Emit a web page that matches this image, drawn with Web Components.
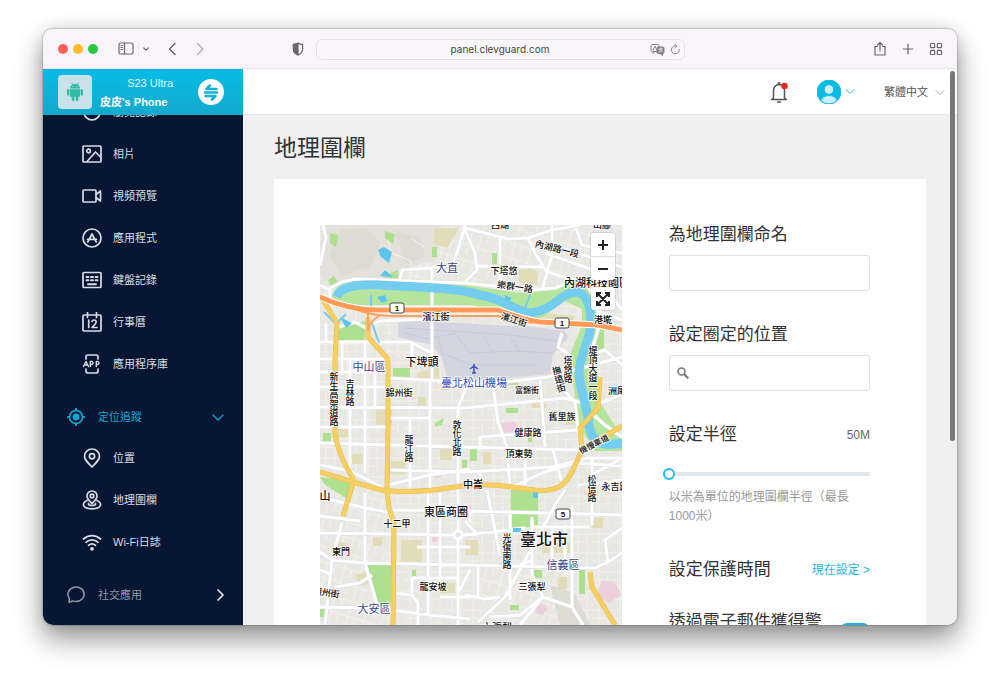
<!DOCTYPE html>
<html lang="zh-Hant">
<head>
<meta charset="utf-8">
<meta name="viewport" content="width=device-width, initial-scale=1">
<title>地理圍欄</title>
<style>
  html, body { margin: 0; height: 100%; }
  body {
    background: #fff;
    color: #333;
    font-family: "Liberation Sans", "Noto Sans CJK TC", sans-serif;
    font-size: 12px;
    --accent: #12b7e2;
  }
</style>
</head>
<body>
<browser-window>
  <browser-toolbar slot="toolbar" address="panel.clevguard.com"></browser-toolbar>
  <side-panel slot="sidebar">
    <phone-card slot="head" model="S23 Ultra" name="皮皮's Phone"></phone-card>
    <nav-item icon="history">瀏覽記錄</nav-item>
    <nav-item icon="photo">相片</nav-item>
    <nav-item icon="video">視頻預覽</nav-item>
    <nav-item icon="apps">應用程式</nav-item>
    <nav-item icon="keyboard">鍵盤記錄</nav-item>
    <nav-item icon="calendar">行事曆</nav-item>
    <nav-item icon="applib">應用程序庫</nav-item>
    <nav-section icon="target" open>定位追蹤</nav-section>
    <nav-item icon="pin">位置</nav-item>
    <nav-item icon="fence">地理圍欄</nav-item>
    <nav-item icon="wifi">Wi-Fi日誌</nav-item>
    <nav-section icon="chat">社交應用</nav-section>
  </side-panel>
  <account-bar slot="header"></account-bar>
  <page-card heading="地理圍欄">
    <city-map slot="map"></city-map>
    <fence-form slot="form"></fence-form>
  </page-card>
</browser-window>

<script>
const define = (name, markup, setup) => {
  const template = document.createElement('template');
  customElements.define(name, class extends HTMLElement {
    constructor() {
      super();
      this.attachShadow({ mode: 'open' });
    }
    connectedCallback() {
      if (this.shadowRoot.childNodes.length) return;
      template.innerHTML = typeof markup === 'function' ? markup(this) : markup;
      this.shadowRoot.append(template.content.cloneNode(true));
      if (setup) setup(this.shadowRoot, this);
    }
  });
};

/* ---------- Browser frame ---------- */
define('browser-window', `
<style>
  :host { display: flex; box-sizing: border-box; height: 100vh; padding: 29px 43px 57px; }
  .frame {
    flex: 1; min-width: 0; display: grid; position: relative; overflow: hidden;
    grid-template: auto auto minmax(0, 1fr) / 200px minmax(0, 1fr);
    border-radius: 10px; background: #f0f0f0;
  }
  .shadow { flex: 1; display: flex; min-width: 0; border-radius: 10px;
    box-shadow: 0 0 1px 1px rgba(0,0,0,.14), 0 14px 28px rgba(0,0,0,.42), 0 0 16px rgba(0,0,0,.12); }
  slot[name=toolbar] { display: block; grid-column: 1 / -1; }
  slot[name=sidebar] { display: grid; grid-row: 2 / 4; grid-column: 1; min-height: 0; }
  main { min-height: 0; overflow: hidden; }
  .thumb { position: absolute; right: 2px; top: 42px; width: 5px; height: 62%; border-radius: 3px; background: #777; }
</style>
<div class="shadow"><div class="frame">
  <slot name="toolbar"></slot>
  <slot name="sidebar"></slot>
  <slot name="header"></slot>
  <main><slot></slot></main>
  <div class="thumb"></div>
</div></div>`);

define('browser-toolbar', el => `
<style>
  :host { display: block; }
  .bar { display: grid; grid-template-columns: 1fr minmax(0, 369px) 1fr; align-items: center;
    height: 40px; box-sizing: border-box; background: #f9f4fa; border-bottom: 1px solid #e9e4ea; padding-top: 1px; }
  .side { display: flex; align-items: center; }
  .left { padding-left: 15px; }
  .dots { display: flex; gap: 5px; margin-right: 20px; }
  .dots i { width: 10px; height: 10px; border-radius: 50%; }
  .right { justify-content: flex-end; gap: 14px; padding-right: 14px; }
  button { border: 0; padding: 0; background: none; display: block; color: #6a666c; }
  svg { display: block; fill: none; stroke: currentColor; stroke-width: 1.2; stroke-linecap: round; stroke-linejoin: round; }
  .panel { margin-right: 4px; padding-right: 4px; border-right: 1px solid #ece7ed; }
  .back { margin-left: 17px; color: #58545a; }
  .fwd { margin-left: 13px; color: #aaa6ac; }
  .shield { margin-left: auto; margin-right: 11px; }
  .url { position: relative; }
  input { display: block; box-sizing: border-box; width: 100%; height: 21px; border: 1px solid #e5e0e6; border-radius: 6px;
    background: #faf7fb; text-align: center; font: 10px/19px Inter, "Liberation Sans", sans-serif; color: #444; padding: 0; }
  .tools { position: absolute; right: 4px; top: 4px; display: flex; gap: 5px; }
  .tools button { color: #838085; }
</style>
<div class="bar">
  <div class="side left">
    <div class="dots"><i style="background:#ff5f57"></i><i style="background:#febc2e"></i><i style="background:#28c840"></i></div>
    <button class="panel" aria-label="側邊欄"><svg width="16" height="14"><rect x="1" y="1" width="14" height="11" rx="1.5"/><path d="M6.500 1v11M3 3.500h1.500M3 5.500h1.500M3 7.500h1.500"/></svg></button>
    <button aria-label="標籤頁群組"><svg width="6" height="12"><path d="M.8 5l2.200 2.200L5.200 5"/></svg></button>
    <button class="back" aria-label="上一頁"><svg width="14" height="14"><path d="M9 1.500L3.500 7 9 12.500"/></svg></button>
    <button class="fwd" aria-label="下一頁"><svg width="14" height="14"><path d="M4.500 1.500L10 7l-5.500 5.500"/></svg></button>
    <button class="shield" aria-label="隱私"><svg width="14" height="14"><path d="M7 1.200c-1.500 1-3 1.200-4.600 1.200v4.600c0 3 2 4.900 4.600 5.900 2.600-1 4.600-2.900 4.600-5.900V2.400C10 2.400 8.500 2.200 7 1.200z"/><path d="M7 1.200v11.700c-2.600-1-4.600-2.900-4.600-5.900V2.400C4 2.400 5.500 2.200 7 1.200z" fill="currentColor"/></svg></button>
  </div>
  <div class="url">
    <input type="text" aria-label="網址" value="${el.getAttribute('address')}">
    <div class="tools">
      <button aria-label="翻譯"><svg width="15" height="13" style="stroke-width:1"><rect x="1" y="1.500" width="8" height="7" rx="1.500"/><path d="M3.200 7L5 3l1.800 4M3 8.500v2l2-2"/><rect x="7" y="4" width="7" height="6.500" rx="1.500" fill="currentColor"/><path d="M10 10.500l2.500 2v-2z" fill="currentColor"/><path d="M8.800 6h3.600M10.600 5v1M9 9c1.600-.6 2.600-1.600 3-3M9.500 6.500c.5 1 1.500 2 2.700 2.500" stroke="#faf7fb" stroke-width=".7"/></svg></button>
      <button aria-label="重新載入"><svg width="11" height="13" style="stroke-width:1"><path d="M9.300 6.500a4 4 0 1 1-2.500-3.400M4.800 1l2 2-2 2"/></svg></button>
    </div>
  </div>
  <div class="side right">
    <button aria-label="分享"><svg width="14" height="16"><path d="M4.500 5.500H2V14h10V5.500H9.500M7 10V1.500M4.500 4L7 1.500 9.500 4"/></svg></button>
    <button aria-label="新標籤頁"><svg width="14" height="14"><path d="M7 2v10M2 7h10"/></svg></button>
    <button aria-label="標籤頁概覽"><svg width="14" height="14"><rect x="1.500" y="1.500" width="4.200" height="4.200" rx=".8"/><rect x="8.300" y="1.500" width="4.200" height="4.200" rx=".8"/><rect x="1.500" y="8.300" width="4.200" height="4.200" rx=".8"/><rect x="8.300" y="8.300" width="4.200" height="4.200" rx=".8"/></svg></button>
  </div>
</div>`);

/* ---------- Sidebar ---------- */
define('side-panel', `
<style>
  :host { display: flex; flex-direction: column; min-height: 0; background: #071633; }
  slot[name=head] { display: block; position: relative; z-index: 1; }
  nav { flex: 1; min-height: 0; overflow: hidden; }
  .list { margin-top: -24px; }
</style>
<slot name="head"></slot>
<nav aria-label="功能"><div class="list"><slot></slot></div></nav>`);

define('phone-card', el => `
<style>
  :host { display: block; }
  .card { display: flex; align-items: center; gap: 8px; height: 46px; padding: 0 19px 0 15px;
    background: linear-gradient(#06bce6, #14a9cb); color: #fff; font-size: 11px; line-height: 19px; }
  .device { display: grid; place-items: center; width: 34px; height: 34px; border-radius: 4px; background: #c8e1ea; }
  .text { width: 73px; padding-top: 2px; white-space: nowrap; }
  .model { text-align: right; color: #e2f7fd; }
  .name { font-weight: bold; }
  button { margin-left: auto; border: 0; padding: 0; background: none; }
  svg { display: block; }
</style>
<div class="card">
  <div class="device"><svg width="18" height="20" fill="#2fbda6"><path d="M4 6.500a5 4.600 0 0 1 10 0z"/><path d="M5.500 1l1.500 2M12.500 1L11 3" stroke="#2fbda6"/><path d="M4 7.300h10v7.500H4z"/><rect x="1" y="7" width="2.400" height="6.500" rx="1.200"/><rect x="14.600" y="7" width="2.400" height="6.500" rx="1.200"/><rect x="5.700" y="13" width="2.600" height="6" rx="1.200"/><rect x="9.700" y="13" width="2.600" height="6" rx="1.200"/><circle cx="6.800" cy="4.500" r=".6" fill="#c8e1ea"/><circle cx="11.200" cy="4.500" r=".6" fill="#c8e1ea"/></svg></div>
  <div class="text"><div class="model">${el.getAttribute('model')}</div><div class="name">${el.getAttribute('name')}</div></div>
  <button aria-label="切換裝置"><svg width="26" height="26"><circle cx="13" cy="13" r="13" fill="#fff"/><path d="M18.500 10H8.500l3.500-3.500M7 13.500h12M7.500 17H17.500L14 20.500" fill="none" stroke="#12b0d6" stroke-width="2.500" stroke-linecap="round" stroke-linejoin="round"/></svg></button>
</div>`);

const ICONS = {
  history: '<circle cx="10" cy="10" r="8"/><path d="M10 5v5l3 2"/>',
  photo: '<rect x="1" y="2" width="18" height="16" rx="1"/><circle cx="6.500" cy="7" r="1.800"/><path d="M5 17.500L13.500 8l5 5"/>',
  video: '<rect x="1" y="4" width="13" height="12" rx="1"/><path d="M14 8.500L18.500 5v10L14 11.500"/>',
  apps: '<circle cx="10" cy="10" r="9"/><path d="M5.800 14L10 6l4.200 8M5.500 11.300h9"/>',
  keyboard: '<rect x="1" y="2.500" width="18" height="15" rx="1"/><path d="M4.500 7h2M9 7h2M13.500 7h2M4.500 10.300h2M9 10.300h2M13.500 10.300h2M6 14.200h8" stroke-width="1.900"/>',
  calendar: '<rect x="1" y="3" width="18" height="16" rx="1"/><path d="M5.500 .5v5M14.500 .5v5M6.700 8v7.500M10 9.500c.3-1.200 1-1.500 2-1.500 2.800 0 2.600 2.700 1 4.200L10 15.500h5"/>',
  applib: '<path d="M4 5V3q0-2 2-2h8q2 0 2 2v2M4 15v2q0 2 2 2h8q2 0 2-2v-2"/><path d="M1.500 12.500L4 7.500l2.500 5M2.400 11h3.200M8.300 12.500v-5H10q2.300 1.500 0 3H8.300M14.300 12.500v-5H16q2.300 1.500 0 3h-1.700" stroke-width="1.400"/>',
  pin: '<path d="M10 19C5 14 2.500 11.500 2.500 8.300a7.500 7.300 0 0 1 15 0C17.500 11.500 15 14 10 19z"/><circle cx="10" cy="8.300" r="2.600"/>',
  fence: '<path d="M10 13.500C7 10.500 5 9 5 6a5 5 0 0 1 10 0c0 3-2 4.500-5 7.500z"/><circle cx="10" cy="6" r="1.800"/><path d="M5 10.500C-1 13 .5 18.800 10 18.800S21 13 15 10.500M6.500 13.500c-1.500 2.600 8.500 2.600 7 0"/>',
  wifi: '<path d="M1.500 7c5-4.500 12-4.500 17 0M4 10.300c3.500-3.200 8.500-3.200 12 0M6.500 13.400c2.200-1.900 4.800-1.900 7 0"/><circle cx="10" cy="16.800" r="1" fill="currentColor"/>',
  target: '<circle cx="10" cy="10" r="7.300"/><circle cx="10" cy="10" r="3" fill="currentColor"/><path d="M10 .8v2M10 17.200v2M.8 10h2M17.200 10h2" stroke-width="2.200"/>',
  chat: '<path d="M2.500 18V13.500A9 8 0 1 1 6.500 16.500z"/>'
};
const icon = (name, size) => `<svg width="${size}" height="${size}" viewBox="0 0 20 20" aria-hidden="true">${ICONS[name]}</svg>`;
const NAV_STYLE = `
  :host { display: block; font-size: 11px; line-height: 16px; }
  a, button { display: flex; align-items: center; text-decoration: none; box-sizing: border-box; width: 100%; }
  svg { display: block; flex: none; fill: none; stroke: currentColor; stroke-width: 1.7; stroke-linecap: round; stroke-linejoin: round; }`;

define('nav-item', el => `
<style>${NAV_STYLE}
  a { height: 42px; gap: 11px; padding-left: 39px; color: #d9dce2; }
</style>
<a href="#${el.getAttribute('icon')}">${icon(el.getAttribute('icon'), 20)}<span><slot></slot></span></a>`);

define('nav-section', el => `
<style>${NAV_STYLE}
  :host { padding-top: 12px; color: #8f97a6; }
  :host([open]) { color: #0fa9d0; }
  button { height: 40px; gap: 13px; padding: 0 19px 0 24px; border: 0; background: none; color: inherit; font: inherit; }
  .arrow { margin-left: auto; color: #e4e6ea; }
  :host([open]) .arrow { color: inherit; stroke-width: 1.300; }
</style>
<button aria-expanded="${el.hasAttribute('open')}">${icon(el.getAttribute('icon'), 18)}<span><slot></slot></span>
<svg class="arrow" width="12" height="12" aria-hidden="true"><path d="${el.hasAttribute('open') ? 'M1 4l5 5 5-5' : 'M6 1l5 5-5 5'}"/></svg></button>`);

/* ---------- Account bar ---------- */
define('account-bar', `
<style>
  :host { display: block; }
  header { display: flex; align-items: center; justify-content: flex-end; height: 46px; padding-right: 12px;
    box-sizing: border-box; background: #fff; border-bottom: 1px solid #e8e8e8; }
  button { display: flex; align-items: center; gap: 4px; border: 0; padding: 0; background: none; color: #1fb9e4; }
  svg { display: block; fill: none; stroke: currentColor; stroke-linecap: round; stroke-linejoin: round; }
  .bell { color: #555; margin-right: 28px; }
  .user { margin-right: 29px; }
  label { position: relative; display: flex; align-items: center; color: #aaa; }
  select { appearance: none; border: 0; background: none; margin: 0; padding: 1px 17px 0 0; width: 61px; color: #555;
    font: 11px/16px "Liberation Sans", "Noto Sans CJK TC", sans-serif; }
  label svg { position: absolute; right: 0; top: 5px; pointer-events: none; }
</style>
<header>
  <button class="bell" aria-label="通知"><svg width="20" height="22" stroke-width="1.500"><path d="M4.500 17V9.500a5.500 6 0 0 1 11 0V17l2 1.500h-15zM8.500 21h3M9 2h2"/><circle cx="15.500" cy="5" r="3.200" fill="#ee2323" stroke="none"/></svg></button>
  <button class="user" aria-label="帳戶"><svg width="24" height="24" stroke="none"><circle cx="12" cy="12" r="12" fill="#06bbe4"/><circle cx="12" cy="9.500" r="4.800" fill="#cdf1fa"/><path d="M4 20.900c1-7.200 15-7.200 16 0a12 12 0 0 1-16 0z" fill="#cdf1fa"/></svg>
  <svg width="10" height="10"><path d="M1 2.500l4 4 4-4"/></svg></button>
  <label aria-label="語言"><select><option>繁體中文</option></select><svg width="10" height="10"><path d="M1 2.500l4 4 4-4"/></svg></label>
</header>`);

/* ---------- Page card ---------- */
define('page-card', el => `
<style>
  :host { display: block; padding: 17px 31px 0; }
  h1 { margin: 0 0 15px; font-size: 23px; line-height: 32px; font-weight: 400; color: #333; }
  section { display: grid; grid-template-columns: 3fr 2fr; gap: 47px; padding: 46px 56px 46px 46px; background: #fefefe; }
</style>
<h1>${el.getAttribute('heading')}</h1>
<section><slot name="map"></slot><slot name="form"></slot></section>`);

/* ---------- Form ---------- */
define('fence-form', `
<style>
  :host { display: block; }
  form { display: flex; flex-direction: column; gap: 34px; }
  .title { font-size: 17px; line-height: 20px; color: #333; }
  label.title { display: block; }
  input[type=text], input[type=search] { display: block; box-sizing: border-box; width: 100%; height: 36px; margin-top: 10px;
    border: 1px solid #dfdfdf; border-radius: 3px; background: #fff; font: inherit; padding: 0 8px; outline: 0; appearance: none; }
  input[type=search] { padding-left: 28px; }
  .search { position: relative; }
  .search svg { position: absolute; left: 8px; top: 12px; fill: none; stroke: #777; stroke-width: 1.600; }
  .row { display: flex; align-items: center; justify-content: space-between; }
  output { color: #666; line-height: 20px; }
  input[type=range] { appearance: none; display: block; width: calc(100% + 6px); height: 18px; margin: 20px 0 5px -6px; background: none; }
  input[type=range]::-webkit-slider-runnable-track { height: 4px; border-radius: 2px; background: #e1e6ea; }
  input[type=range]::-webkit-slider-thumb { appearance: none; box-sizing: border-box; width: 12px; height: 12px; margin-top: -4px;
    border: 2px solid #1fbce4; border-radius: 50%; background: #fff; }
  p { margin: 0; line-height: 19px; color: #999; }
  a { color: #1fb9e0; text-decoration: none; line-height: 20px; }
  .mail { gap: 18px; align-items: flex-start; margin-top: -2px; }
  .mail input { appearance: none; flex: none; width: 30px; height: 14px; margin: 11px 0 0; border-radius: 7px; background: #12b7e2; }
</style>
<form>
  <div><label class="title" for="name">為地理圍欄命名</label><input id="name" type="text"></div>
  <div><label class="title" for="place">設定圈定的位置</label>
    <div class="search"><input id="place" type="search"><svg width="12" height="12"><circle cx="4.500" cy="4.500" r="3.500"/><path d="M7 7l4.300 4.300" stroke-width="2"/></svg></div></div>
  <div><div class="row"><label class="title" for="radius">設定半徑</label><output for="radius">50M</output></div>
    <input id="radius" type="range" min="50" max="1000" value="50">
    <p>以米為單位的地理圍欄半徑（最長1000米）</p></div>
  <div class="row"><span class="title">設定保護時間</span><a href="#time">現在設定 &gt;</a></div>
  <div class="row mail"><label class="title" for="mail">透過電子郵件獲得警告</label><input id="mail" type="checkbox" checked></div>
</form>`);

/* ---------- Map ---------- */
// Place names: text, centre x, centre y, size, kind, rotation
const PLACES = [
  ['大直',127,43,11,'area'], ['中山區',49,142,11,'area'], ['信義區',243,340,11,'area'], ['大安區',54,384,11,'area'],
  ['臺北松山機場',154,158,11,'air'], ['臺北市',224,314,16,'city'], ['下埤頭',102,137,11],
  ['西湖',180,0,9], ['山腳',282,0,9], ['下塔悠',184,46,9], ['樂群一路',195,62,9,'',8], ['內湖路一段',237,24,9,'',14],
  ['濱江街',116,92,9], ['濱江街',194,95,9,'',18], ['港墘',283,95,9], ['錦州街',79,168,9], ['富錦街',207,165,8],
  ['洲尾',297,166,9], ['舊里族',242,192,9], ['健康路',208,208,9], ['頂東勢',199,229,9], ['機慢車道',274,219,8,'',-27],
  ['中崙',153,259,10], ['永吉路',295,262,9], ['山',5,271,11], ['東區商圈',126,287,11], ['十二甲',77,299,9], ['東門',21,327,9],
  ['龍安坡',113,362,9], ['三張犁',212,362,9], ['潮州街',6,368,9,'',8], ['六張犁',177,402,10],
  ['內湖科技園區',277,58,11],
  ['堤頂大道一段',273,148,9,'v'], ['塔悠路',248,145,9,'v'], ['撫遠街',239,154,9,'v',-14], ['新生高架道路',14,174,9,'v'],
  ['吉林路',30,168,9,'v'], ['敦化北路',137,213,9,'v'], ['龍江路',89,224,9,'v'], ['松信路',272,264,9,'v'], ['光復南路',187,326,9,'v']
];
const label = ([text, x, y, size, kind = '', turn = 0]) =>
  `<text class="${kind}" x="${x}" y="${kind === 'v' ? y : y + Math.round(size * .37)}" font-size="${size}"${turn ? ` transform="rotate(${turn} ${x} ${y})"` : ''}>${text}</text>`;
const shield = ([n, x, y]) => `<rect x="${x - 7}" y="${y - 5}" width="14" height="10" rx="2" fill="#fff" stroke="#444"/><text class="num" x="${x}" y="${y + 3}" font-size="8">${n}</text>`;

define('city-map', `
<style>
  :host { display: block; position: relative; overflow: hidden; min-height: 400px; background: #e9e7e1; }
  .tiles { position: absolute; inset: 0; width: 100%; height: 100%; fill: none; stroke-linejoin: round; }
  text { fill: #111; stroke: rgba(255,255,255,.8); stroke-width: 2px; paint-order: stroke; text-anchor: middle; font-weight: 500;
    font-family: "Noto Sans CJK TC", sans-serif; }
  .area { fill: #3c4688; font-weight: 400; }
  .air { fill: #3346c0; font-weight: 400; }
  .num { stroke: none; font-weight: 700; font-family: "Liberation Sans", sans-serif; }
  .v { writing-mode: vertical-rl; }
  .controls { position: absolute; top: 8px; right: 7px; display: flex; flex-direction: column; gap: 7px; }
  .group { border-radius: 4px; overflow: hidden; background: #fff; box-shadow: 0 0 0 1px rgba(0,0,0,.1); }
  button { display: grid; place-items: center; width: 24px; height: 23px; border: 0; padding: 0; background: #fff; }
  button + button { border-top: 1px solid #ddd; height: 24px; }
  button svg { stroke: #222; stroke-width: 2; fill: none; }
</style>
<svg class="tiles" role="img" aria-label="臺北市地圖">
  <defs>
    <pattern id="blocks" width="21" height="19" patternUnits="userSpaceOnUse"><path d="M0 5h21M0 13h13M6 0v19M15 5v14" stroke="#f2f1ed"/></pattern>
    <pattern id="lanes" width="17" height="15" patternUnits="userSpaceOnUse" patternTransform="rotate(17)"><path d="M0 6h17M5 0v15M12 6v9" stroke="#f4f3f0"/></pattern>
    <path id="streets" d="M0 117H90L112 128M0 134H66M0 147H66M0 162H66M68 153L124 156M0 182L145 183 245 173 262 178M68 193H110M0 202H66M0 218L145 222 258 225M160 225V212L258 205M0 240L30 246 62 262M70 245L145 247 232 242 268 233 302 233M68 260L110 250 150 244M192 262L222 248 255 238 302 241M117 157L178 158 228 152 302 132
      M6 98V118M22 117V150M30 134V245M45 117V248M55 134V182M90 193V262M112 42V83M112 96V155M110 157V263M92 117V134M150 152L138 183V400M173 160L178 197 187 222 190 263M220 152L225 222M237 158L255 177 258 205 262 225M233 225L242 258M160 245V263M205 222V260
      M0 272L45 283 68 287M73 285L150 286 302 290M0 308L145 310 205 303M212 302H270M0 327L12 335 45 338 145 340 275 343 288 337 302 328M0 291L40 296M22 298L12 335 5 400M0 345L12 350M45 268V338L58 383M0 382L55 383 110 390 150 394M15 362L40 358 52 350M73 368L92 370 98 378V400M97 322H150M92 353H138M92 353V368M108 268V390M120 268V352M150 345L140 365M120 372H150M150 286V297
      M245 265L238 275 205 335 185 372 158 397M252 280V382L263 400M167 265L180 330M190 285V375M212 292V350L223 372M245 300V350M232 303V335M272 233V300M145 370L165 374 180 372M158 340V372M145 296L158 310M223 372L252 382M223 372L200 390 170 392M223 372L200 400M200 340L213 335M288 337L285 315 302 303M262 180L285 200 302 212M272 250L302 233M258 260L302 255M280 178L302 170M268 130L285 125 302 140
      M10 63L22 57 35 54 145 58 212 65 235 63 255 55 268 62 278 78 278 105 272 125M0 60L10 65V75M80 55L82 45 122 42 133 38 138 25 145 0M145 5L155 28 157 45 145 57M158 41L225 42M180 12V57M145 3L165 8 188 14 208 13 215 28 227 47 255 55M232 0V30L222 65M208 13L232 5 260 0M225 28L302 55M232 20L302 42M255 0L262 20 302 28M284 60L302 85M276 85L302 95M242 108L238 122 250 130M0 40L6 12 3 0M50 105L35 97 15 103M52 100L60 96 110 94"/>
  </defs>
  <rect width="100%" height="100%" fill="url(#blocks)"/>
  <path d="M145 0H302V55H145zM0 265H66V400H0zM160 340H250V400H160zM95 10H145V55H95z" fill="#e9e7e1"/>
  <path d="M145 0H302V55H145zM0 265H66V400H0zM160 340H250V400H160zM95 10H145V55H95z" fill="url(#lanes)"/>
  <path d="M5 0H122L115 35 82 44 78 54 35 52 12 62 0 50V30z" fill="#e4e1da"/>
  <path d="M20 5l25-3 15 15-10 25-28 8-12-20zM75 5l25 8 5 18-20 8zM230 360l25 8 15 32h-30z" fill="#dddbd2"/>
  <path d="M66 8l5 20 20 8v14M71 28l-6-4M92 14l12 8" stroke="#f4f3f0"/>
  <path d="M114 3h25l-12 20-13-4zM198 40l20 6-1 14-18-3zM225 88l30 3-5 10-30-4zM97 148l22-6v12H97zM56 185h16v15H56zM31 229h14v10H31zM71 236h14v13H71zM120 222h12v13h-12zM81 315h21v22H81zM35 350l15-5 4 12-14 4zM222 318h30v10h-30zM145 315h13v15h-13zM272 293h11v10h-11zM238 352h9v12h-9zM212 178h14v5h-14zM163 227h8v12h-8zM120 157h10v8h-10zM18 204h10v8H18zM245 192h14v8h-14zM53 312h9v9h-9zM120 358h15v10h-15zM20 316l7 3-4 8-7-3zM98 172h8v9h-8z" fill="#e2ddb8"/>
  <path d="M181 198l14-1 5 10-16 1zM115 245h6v8h-6zM282 355l12 2 8 13-14 8-12-8zM218 378l10 3-5 10-8-4zM112 312h9v5h-9z" fill="#edd0dc"/>
  <path d="M10 78C12 58 30 52 50 54L145 60 200 68 240 60 262 56 278 70 280 100 275 132 282 180 302 212V226H275L258 200 250 130 262 100 262 84 245 76 220 94 190 90 150 80H40z" fill="#b5e59c"/>
  <path d="M19 103L46 96 44 119H18zM65 6l10 3-2 10-8-6zM10 8l8 2-2 12-6-4zM62 52l16-7v9zM112 22h5v10h-5zM73 143h17v9H73zM172 28h5v12h-5zM180 155h18v5h-18zM115 198l9-5-2 7-7 2zM3 208h8v9H3zM142 235h5v8h-5zM0 252L28 255 33 268 26 273 5 260zM47 340H72V380L60 383zM191 265H218V302H190zM259 345h6v24h-6zM150 224h7v12h-7zM92 345h4v6h-4zM208 210h4v7h-4zM186 183h12v5h-12zM212 345h10v8h-10zM190 380h9v5h-9zM8 55l6-4 5 8-8 2zM272 100h12v25h-10zM0 380h5v12h-5z" fill="#aee18f"/>
  <path d="M78 95L215 102 245 106 248 112 233 130 230 149 178 154 128 156 122 133 112 120 78 112z" fill="#d4d5e1"/>
  <path d="M84 103L190 110 236 116M84 108L108 114 135 108 150 128 195 126 232 128M118 112L122 128 150 140 215 140M165 112L172 126M190 112L200 127" stroke="#c6c9da"/>
  <use href="#streets" stroke="#dcdee9" stroke-width="4"/>
  <use href="#streets" stroke="#fff" stroke-width="3"/>
  <path d="M17 72C20 62 35 59 60 60C100 62 140 63 160 70C185 73 195 88 212 88C235 84 240 68 256 67C266 68 271 80 271 98C270 118 258 133 259 150C262 172 268 185 269 200C272 218 282 222 302 218" stroke="#74cdee" stroke-width="9"/>
  <path d="M58 25l6-3 8 5-3 11-8-6zM60 51l5-6 8 7zM57 72l8-2 2 6-5 2zM20 92l12 6-6 5zM213 265h5v8h-5zM193 303h8v4h-8zM184 70l8 3-5 4z" fill="#5cc5ed"/>
  <path d="M51 70V85M52 98L59 118M210 70L203 88M4 87l12 12 10-10" stroke="#74cdee" stroke-width="2"/>
  <g stroke="#e8bb50" stroke-width="5">
    <path id="avenues" d="M0 70L17 98 15 133V207Q17 228 34 255L30 268 23 291M48 92V112L67 133 68 140V197L67 267 69 283 74 298 73 400M0 247L33 257 62 265Q95 269 128 263T192 262 228 265Q243 264 252 247L262 225 260 203 278 183 280 152M262 225L302 201M270 347L272 362 295 400"/>
  </g>
  <use href="#avenues" stroke="#f6cf62" stroke-width="4"/>
  <g stroke="#fff" stroke-width="7"><path d="M0 72Q30 86 62 85L178 85Q205 95 220 97L278 100 302 105"/></g>
  <path d="M34 84Q50 90 70 91H178L212 98M48 104V88M60 90Q48 98 48 106" stroke="#ffa25e" stroke-width="2"/>
  <path d="M0 72Q30 86 62 85L178 85Q205 95 220 97L278 100 302 105" stroke="#ff9b57" stroke-width="5"/>
  <circle cx="138" cy="310" r="4" fill="#dfe3ee" stroke="#fff" stroke-width="3"/>
  <path d="M154 139v9M150 144l4-3 4 3M152 148h4" stroke="#3c55c8" stroke-width="1.500"/>
  ${PLACES.map(label).join('')}
  ${[['1', 77, 83], ['1', 242, 98], ['5', 243, 289]].map(shield).join('')}
</svg>
<div class="controls">
  <div class="group">
    <button aria-label="放大"><svg width="12" height="12"><path d="M6 1v10M1 6h10"/></svg></button>
    <button aria-label="縮小"><svg width="12" height="12"><path d="M1 6h10"/></svg></button>
  </div>
  <div class="group"><button aria-label="全螢幕"><svg width="16" height="16"><path d="M3 3l10 10M13 3L3 13M2 6V2h4M10 2h4v4M14 10v4h-4M6 14H2v-4"/></svg></button></div>
</div>`);
</script>
</body>
</html>
